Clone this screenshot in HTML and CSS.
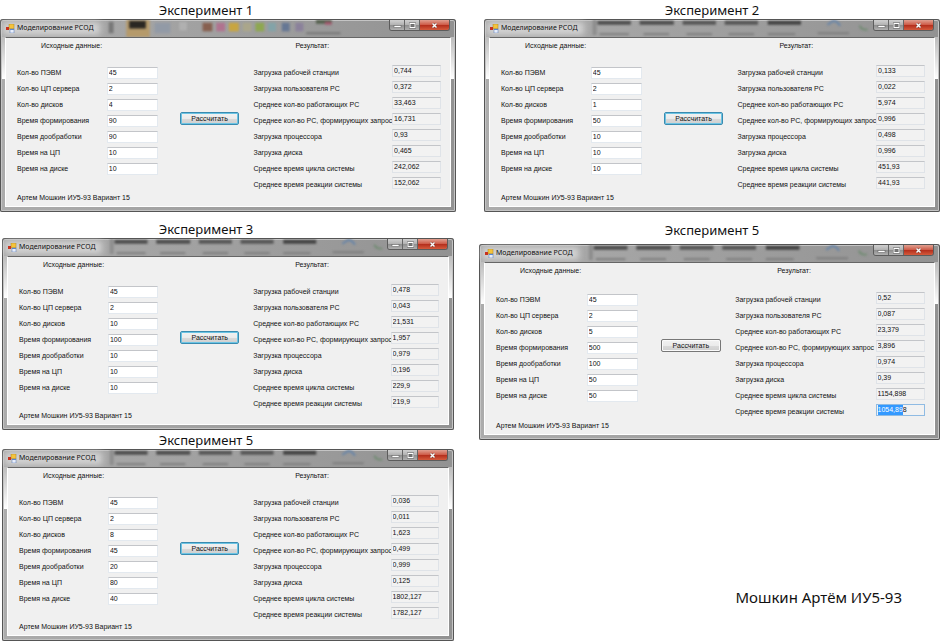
FILE: index.html
```html
<!DOCTYPE html>
<html lang="ru">

<head>
    <meta charset="UTF-8">
    <meta name="viewport" content="width=device-width, initial-scale=1.0">
    <title>Моделирование РСОД</title>
    <link rel="stylesheet" href="styles.css">
</head>

<body>
    <main class="slide">
        <div class="column column-left">
            <section class="experiment" data-index="0"></section>
            <section class="experiment narrow" data-index="2"></section>
            <section class="experiment narrow" data-index="4"></section>
        </div>
        <div class="column column-right">
            <section class="experiment shifted" data-index="1"></section>
            <section class="experiment tall" data-index="3"></section>
            <p class="author">Мошкин Артём ИУ5-93</p>
        </div>
    </main>

    <!-- Blurred desktop behind the glass title bar -->
    <template id="glassRibbon">
        <svg class="glass" viewBox="0 0 456 18" preserveAspectRatio="none" aria-hidden="true">
            <g class="smudge">
                <rect x="106" y="2" width="5" height="12" fill="#777" />
                <rect x="124" y="0" width="24" height="18" fill="#b59a6b" />
                <rect x="127" y="1" width="17" height="8" fill="#2a2722" />
                <rect x="153" y="3" width="16" height="11" fill="#929aa6" />
                <rect x="178" y="2" width="8" height="9" fill="#b0b0b0" />
                <rect x="202" y="3" width="10" height="9" fill="#876050" />
                <rect x="216" y="3" width="9" height="9" fill="#b0738f" />
                <rect x="229" y="3" width="10" height="9" fill="#c8a540" />
                <rect x="243" y="3" width="9" height="9" fill="#aaa68b" />
                <rect x="256" y="3" width="9" height="9" fill="#8ea750" />
                <rect x="269" y="3" width="8" height="9" fill="#83a3a8" />
                <rect x="283" y="3" width="8" height="9" fill="#667794" />
                <rect x="297" y="3" width="8" height="9" fill="#8b819b" />
                <rect x="318" y="0" width="16" height="4" fill="#55604e" />
                <rect x="327" y="2" width="7" height="3" fill="#a3566d" />
                <rect x="308" y="13" width="35" height="2" fill="#747474" />
            </g>
        </svg>
    </template>
    <template id="glassText">
        <svg class="glass" viewBox="0 0 456 18" preserveAspectRatio="none" aria-hidden="true">
            <g class="smudge">
                <rect x="106" y="0" width="4" height="16" fill="#8d8d8d" />
                <rect x="111" y="1" width="34" height="4" fill="#4d4d4d" />
                <rect x="154" y="1" width="35" height="4" fill="#4d4d4d" />
                <rect x="198" y="1" width="34" height="4" fill="#555" />
                <rect x="241" y="1" width="34" height="4" fill="#555" />
                <rect x="285" y="1" width="34" height="4" fill="#424242" />
                <rect x="113" y="14" width="30" height="2" fill="#7c7c7c" />
                <rect x="158" y="14" width="26" height="2" fill="#7c7c7c" />
                <rect x="202" y="14" width="26" height="2" fill="#7c7c7c" />
                <rect x="245" y="14" width="26" height="2" fill="#7c7c7c" />
                <rect x="285" y="14" width="28" height="2" fill="#7c7c7c" />
                <rect x="336" y="13" width="32" height="2" fill="#7c7c7c" />
                <path d="M346 5 l6 -4 q4 0 7 5" fill="none" stroke="#6684a8" stroke-width="2" />
                <path d="M379 6 q2 5 8 4" fill="none" stroke="#718b72" stroke-width="2" />
            </g>
        </svg>
    </template>

    <script src="script.js"></script>
</body>

</html>
```
FILE: styles.css
```css
* {
    box-sizing: border-box;
}

body {
    margin: 0;
    background: #fff;
    color: #111;
    font-family: "Noto Sans", "Open Sans", sans-serif;
    font-size: 7px;
}

.slide {
    display: grid;
    grid-template-columns: 456fr 461fr;
    column-gap: 23px;
}

.column {
    display: flex;
    flex-direction: column;
}

.experiment h2 {
    height: 19px;
    margin: 0;
    font-size: 13px;
    font-weight: 400;
    line-height: 21px;
    text-align: center;
}

.column-left h2 {
    padding-right: 44px;
}

.experiment:first-child {
    margin-bottom: 7px;
}

.narrow {
    padding: 0 2px;
}

.shifted {
    padding-left: 5px;
}

.tall h2 {
    height: 25px;
    padding-left: 5px;
    line-height: 23px;
}

/* Window frame */
.window {
    position: relative;
    padding: 0 5px 5px;
    border-radius: 3px 3px 2px 2px;
    background: linear-gradient(90deg, #acacac, #a2a2a2 40%, #929292);
    box-shadow: inset 0 0 0 1px #555, inset 0 0 0 2px #c4c4c4;
    overflow: hidden;
}

/* Light reflection on the side borders */
.window::before {
    content: "";
    position: absolute;
    top: 18px;
    left: 2px;
    right: 2px;
    height: 42px;
    background: linear-gradient(#bcbcbc, #fff);
}

.titlebar {
    position: relative;
    z-index: 0;
    display: flex;
    align-items: center;
    height: 18px;
    padding-left: 1px;
}

.glass {
    position: absolute;
    top: 1px;
    left: 0;
    width: 100%;
    height: 17px;
}

.smudge {
    filter: blur(1px);
}

.app-icon {
    position: relative;
    width: 9px;
    height: 9px;
    margin-right: 2px;
}

.title {
    position: relative;
    line-height: 14px;
    white-space: nowrap;
}

.title::before {
    content: "";
    position: absolute;
    inset: 1px -6px 0 -14px;
    z-index: -1;
    background: #d2d2d2;
    filter: blur(3px);
}

.window-buttons {
    position: relative;
    display: flex;
    align-self: flex-start;
    margin: 1px 1px 0 auto;
    border: 1px solid #5c5c5c;
    border-top: 0;
    border-radius: 0 0 3px 3px;
    overflow: hidden;
}

.window-buttons button {
    display: flex;
    align-items: center;
    justify-content: center;
    width: 15px;
    height: 10px;
    padding: 0;
    border: 0;
    border-right: 1px solid #666;
    background: linear-gradient(#d0d0d0, #b4b4b4 45%, #8d8d8d 50%, #b0b0b0);
}

.window-buttons svg {
    width: 9px;
    height: 7px;
}

.window-buttons .close {
    width: 29px;
    border-right: 0;
    background: linear-gradient(#e0a091, #cf5f4c 45%, #b22c1b 50%, #d45a3c);
}

/* Form */
.client {
    position: relative;
    display: grid;
    grid-template-columns: 90fr 51fr 22fr 60fr 14fr 139fr 49fr;
    grid-template-rows: 29px auto 1fr;
    min-height: 170px;
    padding: 0 9px 0 11px;
    border: 1px solid #fff;
    border-top-color: #666;
    background: #f0f0f0;
    font-family: "Liberation Sans", Arial, sans-serif;
    line-height: 12px;
}

.narrow .client {
    min-height: 169px;
}

.tall .client {
    grid-template-rows: 31px auto 1fr;
    min-height: 173px;
}

.caption {
    margin: 2px 0 0;
}

.caption-input {
    grid-column: 1 / 3;
    padding-left: 24px;
}

.caption-result {
    grid-column: 6 / 8;
    padding-left: 42px;
}

.inputs,
.results {
    display: grid;
    grid-auto-rows: 12px;
    row-gap: 4px;
    align-content: start;
    white-space: nowrap;
}

.inputs {
    grid-column: 1 / 3;
    grid-template-columns: 90fr 51fr;
}

.results {
    grid-column: 6 / 8;
    grid-template-columns: minmax(0, 139fr) minmax(0, 49fr);
    margin-top: -2px;
}

.results label {
    padding-top: 2px;
}

.client input {
    width: 100%;
    min-width: 0;
    height: 12px;
    padding: 0 1px;
    border: 1px solid #e3e9ef;
    border-top-color: #c3c5c9;
    border-radius: 0;
    background: #fff;
    color: #111;
    font: inherit;
    outline: none;
}

.results input {
    background: #f2f2f2;
    border-color: #dfe3e8;
    border-top-color: #c3c5c9;
}

.results input:focus {
    border-color: #8fbbe3;
}

.client input::selection {
    background: #3399ff;
    color: #fff;
}

.calculate {
    grid-column: 4;
    align-self: start;
    height: 13px;
    margin-top: 45px;
    padding: 0;
    border: 1px solid #3a8bb0;
    border-radius: 2px;
    background: linear-gradient(#f2f2f2, #ebebeb 50%, #dadada 52%, #cfcfcf);
    box-shadow: inset 0 0 0 1px #6cc4e4;
    color: #111;
    font: inherit;
    line-height: 10px;
}

.tall .calculate {
    border-color: #777;
    box-shadow: inset 0 0 0 1px #fafafa;
}

.student {
    grid-column: 1 / 4;
    align-self: end;
    margin: 0 0 2px;
}

.author {
    margin: 145px 38px 0 0;
    font-size: 15px;
    line-height: 24px;
    text-align: right;
}
```
FILE: script.js
```js
const inputNames = [
    "Кол-во ПЭВМ",
    "Кол-во ЦП сервера",
    "Кол-во дисков",
    "Время формирования",
    "Время дообработки",
    "Время на ЦП",
    "Время на диске"
];

const resultNames = [
    "Загрузка рабочей станции",
    "Загрузка пользователя PC",
    "Среднее кол-во работающих PC",
    "Среднее кол-во PC, формирующих запрос",
    "Загрузка процессора",
    "Загрузка диска",
    "Среднее время цикла системы",
    "Среднее время реакции системы"
];

const experiments = [
    {
        title: "Эксперимент 1",
        glass: "glassRibbon",
        inputs: ["45", "2", "4", "90", "90", "10", "10"],
        results: ["0,744", "0,372", "33,463", "16,731", "0,93", "0,465", "242,062", "152,062"]
    },
    {
        title: "Эксперимент 2",
        glass: "glassText",
        inputs: ["45", "2", "1", "50", "10", "10", "10"],
        results: ["0,133", "0,022", "5,974", "0,996", "0,498", "0,996", "451,93", "441,93"]
    },
    {
        title: "Эксперимент 3",
        glass: "glassText",
        inputs: ["45", "2", "10", "100", "10", "10", "10"],
        results: ["0,478", "0,043", "21,531", "1,957", "0,979", "0,196", "229,9", "219,9"]
    },
    {
        title: "Эксперимент 5",
        glass: "glassText",
        inputs: ["45", "2", "5", "500", "100", "50", "50"],
        results: ["0,52", "0,087", "23,379", "3,896", "0,974", "0,39", "1154,898", "1054,898"]
    },
    {
        title: "Эксперимент 5",
        glass: "glassText",
        inputs: ["45", "2", "8", "45", "20", "80", "40"],
        results: ["0,036", "0,011", "1,623", "0,499", "0,999", "0,125", "1802,127", "1782,127"]
    }
];

function fields(prefix, names, values, attr) {
    return names.map((name, i) => `
        <label for="${prefix}-${i}">${name}</label>
        <input type="text" id="${prefix}-${i}" value="${values[i]}" ${attr}>`).join("");
}

function render(section) {
    const index = section.dataset.index;
    const item = experiments[index];

    section.innerHTML = `
        <h2>${item.title}</h2>
        <div class="window">
            <div class="titlebar">
                ${document.getElementById(item.glass).innerHTML}
                <svg class="app-icon" viewBox="0 0 9 9" aria-hidden="true">
                    <rect x="3" y="0" width="5" height="5" fill="#f5c33b" stroke="#a98226" stroke-width=".5" />
                    <rect x="0" y="3" width="3" height="3" fill="#c8321f" />
                    <rect x="4" y="5" width="4" height="4" fill="#e8eefb" stroke="#5377b5" stroke-width=".5" />
                    <rect x="4" y="5" width="4" height="1" fill="#5b86d0" />
                </svg>
                <span class="title">Моделирование РСОД</span>
                <div class="window-buttons">
                    <button type="button" aria-label="Свернуть">
                        <svg viewBox="0 0 9 7"><rect x="1" y="3.5" width="7" height="2" fill="#fff" stroke="#555" stroke-width=".5" /></svg>
                    </button>
                    <button type="button" aria-label="Развернуть">
                        <svg viewBox="0 0 9 7"><rect x="2" y="1.5" width="5" height="4" fill="#777" stroke="#666" stroke-width="2" /><rect x="2" y="1.5" width="5" height="4" fill="none" stroke="#fff" /></svg>
                    </button>
                    <button type="button" class="close" aria-label="Закрыть">
                        <svg viewBox="0 0 9 7"><path d="M2.5 1.5 L6.5 5.5 M6.5 1.5 L2.5 5.5" stroke="#6b2a20" stroke-width="2.4" /><path d="M2.5 1.5 L6.5 5.5 M6.5 1.5 L2.5 5.5" stroke="#fff" stroke-width="1.5" /></svg>
                    </button>
                </div>
            </div>
            <form class="client">
                <p class="caption caption-input">Исходные данные:</p>
                <p class="caption caption-result">Результат:</p>
                <div class="inputs">${fields("in" + index, inputNames, item.inputs, "")}</div>
                <button type="button" class="calculate">Рассчитать</button>
                <div class="results">${fields("out" + index, resultNames, item.results, "readonly")}</div>
                <p class="student">Артем Мошкин ИУ5-93 Вариант 15</p>
            </form>
        </div>`;
}

document.querySelectorAll(".experiment").forEach(render);

// Last result of the fourth window is being copied
const copied = document.getElementById("out3-7");
copied.focus();
copied.setSelectionRange(0, 7);
```
